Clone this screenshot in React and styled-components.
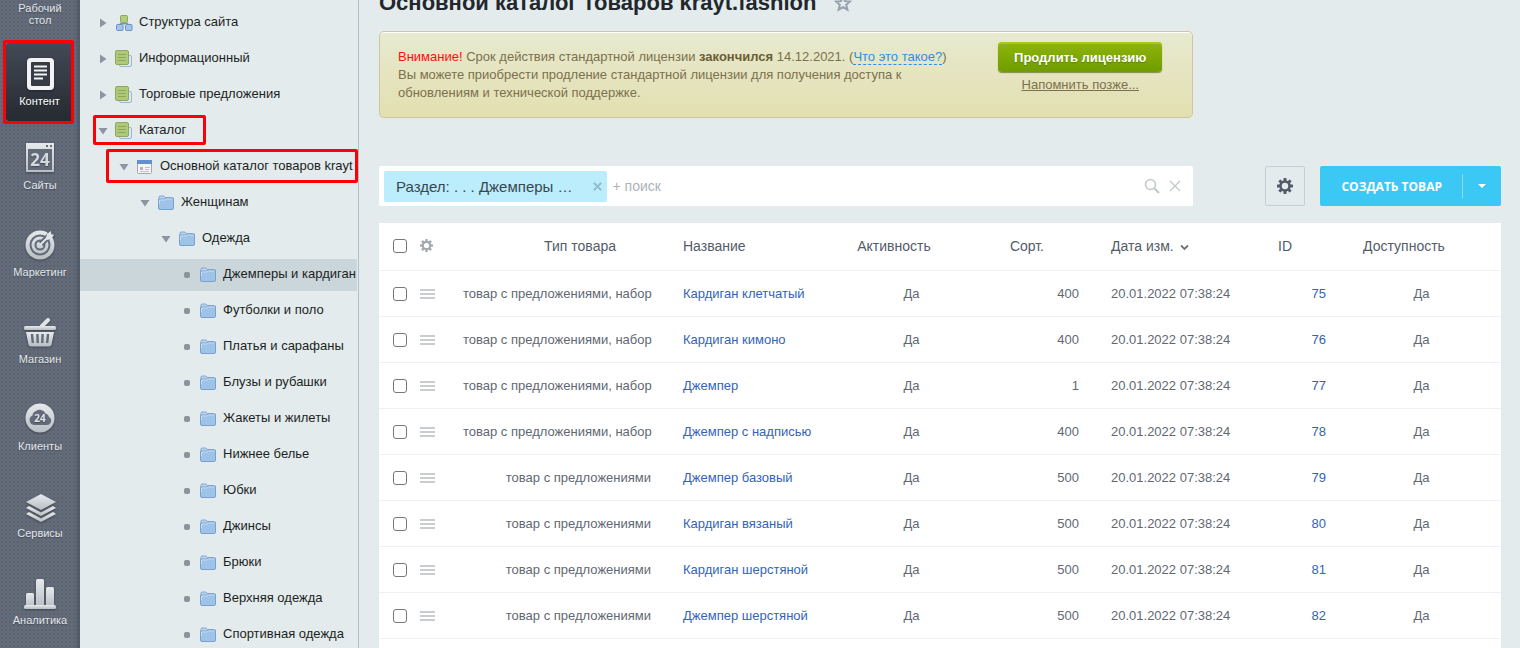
import React, { useState } from "react";
import styled, { createGlobalStyle, css } from "styled-components";

const GlobalStyle = createGlobalStyle`
  * {
    box-sizing: border-box;
  }
  body {
    margin: 0;
    background: #e3ebed;
    color: #1c1f22;
    font-family: "Liberation Sans", Arial, sans-serif;
    font-size: 13px;
  }
  button,
  input {
    font-family: inherit;
    margin: 0;
    padding: 0;
  }
  button {
    border: none;
    background: none;
    cursor: pointer;
  }
  a {
    color: inherit;
    text-decoration: none;
  }
`;

const Page = styled.div`
  display: flex;
  height: 100vh;
  overflow: hidden;
`;

/* main menu */

const Sidebar = styled.nav`
  flex: none;
  width: 80px;
  padding-top: 2px;
  background-color: #636a78;
  background-image: linear-gradient(
      to right,
      rgba(40, 46, 60, 0) 74px,
      rgba(40, 46, 60, 0.3) 80px
    ),
    radial-gradient(rgba(45, 60, 90, 0.14) 1px, transparent 1px);
  background-size: 100% 100%, 4px 4px;
`;

const SidebarItem = styled.a`
  position: relative;
  display: flex;
  flex-direction: column;
  align-items: center;
  gap: 3px;
  padding: 18px 0;
  color: #e3e8ec;
  font-size: 11px;
  line-height: 12px;
  text-align: center;
  text-shadow: 0 1px 1px rgba(0, 0, 0, 0.3);

  ${props =>
    props.$first &&
    css`
      padding: 0 16px 17px;
    `}

  ${props =>
    props.$active &&
    css`
      margin: 0 7px 1px 6px;
      padding: 13px 0 14px;
      color: #fff;
      background: linear-gradient(#434956, #262a31);
      border-radius: 3px;
    `}
`;

const SidebarIcon = styled.svg`
  width: 36px;
  height: 36px;
  filter: drop-shadow(0 1px 1px rgba(0, 0, 0, 0.35));
`;

const Marker = styled.span`
  position: absolute;
  top: ${props => props.$top}px;
  left: ${props => props.$left}px;
  right: ${props => props.$right}px;
  bottom: ${props => props.$bottom}px;
  border: 3px solid #fb0007;
  border-radius: 2px;
  pointer-events: none;
`;

/* tree */

const Tree = styled.aside`
  flex: none;
  width: 279px;
  padding: 7px 1px 0 0;
  overflow: hidden;
  background: #e3ebed;
  border-right: 1px solid #afbfcb;
`;

const TreeList = styled.ul`
  display: flex;
  flex-direction: column;
  gap: 4px;
  margin: 0;
  padding: 0;
  list-style: none;
`;

const TreeRow = styled.li`
  position: relative;
  flex: none;
  display: flex;
  align-items: center;
  height: 32px;
  padding-left: ${props => 16 + props.$level * 21}px;
  background: ${props => (props.$selected ? "#cbd6db" : "transparent")};
`;

const TreeToggle = styled.button`
  flex: none;
  display: flex;
  align-items: center;
  justify-content: center;
  width: 13px;
  height: 16px;
  margin-right: 6px;
`;

const TreeBullet = styled.span`
  flex: none;
  width: 6px;
  height: 6px;
  margin: 0 9px 0 4px;
  border-radius: 2px;
  background: #8b939b;
`;

const TreeLink = styled.a`
  display: flex;
  align-items: center;
  gap: 6px;
  min-width: 0;
  white-space: nowrap;

  svg {
    flex: none;
  }
`;

const TreeLabel = styled.span`
  padding-bottom: 2px;
  line-height: 16px;
`;

/* content */

const Main = styled.main`
  flex: 1;
  min-width: 0;
  display: grid;
  grid-template-columns: minmax(0, 1fr) auto;
  grid-template-rows: 31px 87px auto 1fr;
  column-gap: 72px;
  padding: 0 19px 0 20px;
`;

const TitleBar = styled.header`
  grid-column: 1 / -1;
  display: flex;
  align-items: center;
  gap: 18px;
  height: 28px;
  margin-top: -11px;
`;

const Title = styled.h1`
  margin: 0;
  color: #22272b;
  font-size: 22px;
  line-height: 28px;
  white-space: nowrap;
`;

const IconButton = styled.button`
  display: flex;
  align-items: center;
  justify-content: center;
`;

const Notice = styled.section`
  grid-column: 1;
  display: flex;
  justify-content: space-between;
  gap: 32px;
  padding: 10px 30px 0 18px;
  color: #7c704d;
  background: linear-gradient(#e7ead0, #e3dfb0);
  border: 1px solid #ccc79c;
  border-radius: 5px;
  box-shadow: inset 0 1px 0 #fff;
`;

const NoticeText = styled.p`
  max-width: 560px;
  margin: 6px 0 0;
  line-height: 18px;
`;

const Warning = styled.span`
  color: #ff0c0c;
`;

const NoticeStrong = styled.b`
  color: #6b5d33;
`;

const HelpLink = styled.a`
  color: #2b8fe8;
  border-bottom: 1px dashed #2b8fe8;
`;

const NoticeActions = styled.div`
  flex: none;
  display: flex;
  flex-direction: column;
  align-items: center;
  gap: 4px;
`;

const RenewButton = styled.button`
  height: 30px;
  padding: 0 16px;
  color: #fff;
  font-size: 13px;
  font-weight: bold;
  background: linear-gradient(#8fb50a, #6f9c00);
  border-radius: 4px;
  box-shadow: inset 0 2px 0 #a5c71f, 0 1px 1px rgba(70, 80, 0, 0.6);
  text-shadow: 0 1px 1px rgba(60, 90, 0, 0.5);
`;

const LaterLink = styled.a`
  line-height: 18px;
  text-decoration: underline;
`;

const Search = styled.div`
  grid-column: 1;
  display: flex;
  align-items: center;
  height: 40px;
  margin-top: 48px;
  padding: 0 12px 0 5px;
  background: #fff;
  border-radius: 2px;
`;

const FilterTag = styled.span`
  display: flex;
  align-items: center;
  justify-content: space-between;
  gap: 20px;
  height: 31px;
  padding: 0 5px 0 12px;
  color: #38474f;
  font-size: 15px;
  white-space: nowrap;
  background: #bcedfc;
  border-radius: 2px;
`;

const SearchInput = styled.input`
  flex: 1;
  min-width: 0;
  height: 100%;
  padding: 0 6px;
  font-size: 14px;
  border: none;
  outline: none;
  background: none;

  &::placeholder {
    color: #acb2b8;
    opacity: 1;
  }
`;

const SearchTools = styled.div`
  display: flex;
  gap: 9px;
`;

const Actions = styled.div`
  display: flex;
  gap: 15px;
  margin-top: 48px;
`;

const SettingsButton = styled(IconButton)`
  width: 40px;
  height: 40px;
  border: 1px solid #c6cfd3;
  border-radius: 2px;
`;

const SplitButton = styled.div`
  display: flex;
  align-items: center;
  height: 40px;
  background: #3bc8f5;
  border-radius: 2px;
`;

const CreateButton = styled.button`
  height: 100%;
  padding: 0 20px 0 21px;
  color: #fff;
  font: bold 12px "Open Sans", sans-serif;
  text-transform: uppercase;
`;

const CreateMenuButton = styled(IconButton)`
  width: 39px;
  height: 24px;
  border-left: 1px solid #8adef9;
`;

/* grid */

const GridCard = styled.div`
  grid-column: 1 / -1;
  margin-top: 17px;
  background: #fff;
`;

const Table = styled.table`
  width: 100%;
  table-layout: fixed;
  border-collapse: separate;
  border-spacing: 0;
  color: #5f6873;
`;

const Col = styled.col`
  width: ${props => props.$width}px;
`;

const cell = css`
  text-align: ${props => props.$align || "left"};
  border-bottom: 1px solid #edf1f2;
  white-space: nowrap;
`;

const HeadCell = styled.th`
  ${cell}
  height: 48px;
  padding: 0 ${props => (props.$control ? 0 : 16)}px 2px;
  color: #535c69;
  font-size: 14px;
  font-weight: normal;
`;

const Cell = styled.td`
  ${cell}
  height: 46px;
  padding: 0 ${props => (props.$control ? 0 : 16)}px;
`;

const HeadLabel = styled.span`
  display: inline-flex;
  align-items: center;
  gap: 6px;
  padding-right: ${props => (props.$sorted ? 0 : 35)}px;
`;

const Checkbox = styled.input`
  display: block;
  width: 14px;
  height: 14px;
  margin-left: 14px;
  appearance: none;
  background: #fff;
  border: 1px solid #767676;
  border-radius: 3px;

  &:checked {
    background: #3bc8f5;
  }
`;

const RowMenu = styled.button`
  display: flex;
  flex-direction: column;
  gap: 2px;
  width: 15px;
  margin-left: 5px;

  span {
    width: 15px;
    height: 2px;
    background: #c9cdd1;
  }
`;

const GridSettings = styled(IconButton)`
  margin-left: 5px;
`;

const CellLink = styled.a`
  color: #3464b5;
`;

const Metal = ({ id }) => (
  <linearGradient id={id} x1="0" y1="0" x2="0" y2="1">
    <stop offset="0" stopColor="#e6eaec" />
    <stop offset="1" stopColor="#b6bfc4" />
  </linearGradient>
);

const sidebarIcons = {
  content: (
    <>
      <rect x="5" y="2" width="27" height="32" rx="4" fill="#f1f3f4" />
      <rect x="9" y="6" width="19" height="24" rx="1" fill="#363b45" />
      <path
        d="M12 10.500h13M12 14.500h13M12 18.500h13M12 22.500h9"
        stroke="#f1f3f4"
        strokeWidth="2"
      />
    </>
  ),
  sites: (
    <>
      <path d="M4 3h28v29H4z" fill="url(#m-sites)" />
      <path d="M24 5h2v2h-2zM28 5h2v2h-2zM6 9h24v21H6z" fill="#636a78" />
      <text
        x="18"
        y="26"
        textAnchor="middle"
        fontFamily="Open Sans, sans-serif"
        fontWeight="bold"
        fontSize="17"
        fill="#d3dade"
      >
        24
      </text>
    </>
  ),
  marketing: (
    <>
      <circle cx="18" cy="18" r="14.500" fill="url(#m-marketing)" />
      <circle cx="18" cy="18" r="9.500" fill="none" stroke="#636a78" strokeWidth="2" />
      <circle cx="18" cy="18" r="4.500" fill="none" stroke="#636a78" strokeWidth="2" />
      <path d="M19 17L31 5" stroke="#636a78" strokeWidth="6" />
      <path d="M18 18L28 8" stroke="#dfe4e7" strokeWidth="2" />
      <path d="M24 11l1-4 4-3v3l3 1-3 4-4 1z" fill="#dfe4e7" />
    </>
  ),
  shop: (
    <>
      <path d="M20 12l6-6" stroke="#dfe4e7" strokeWidth="4" strokeLinecap="round" />
      <rect x="2" y="12" width="32" height="4" rx="1.500" fill="url(#m-shop)" />
      <path d="M4 18h28l-2.500 12.500q-.500 2-2.500 2H9q-2 0-2.500-2z" fill="url(#m-shop)" />
      <path
        d="M10 20l.800 9M15.400 20l.300 9M20.600 20l-.300 9M26 20l-.800 9"
        stroke="#636a78"
        strokeWidth="2.400"
      />
    </>
  ),
  clients: (
    <>
      <circle cx="18" cy="17" r="14.500" fill="url(#m-clients)" />
      <path
        d="M12 24a5 5 0 0 1-1.500-9.500A5 5 0 0 1 14 10a6.500 6.500 0 0 1 9.500 2.500A4.500 4.500 0 0 1 27 16a4.300 4.300 0 0 1-2 8z"
        fill="#636a78"
      />
      <text
        x="18"
        y="21"
        textAnchor="middle"
        fontFamily="Open Sans, sans-serif"
        fontWeight="bold"
        fontSize="10"
        fill="#dfe4e7"
      >
        24
      </text>
    </>
  ),
  services: (
    <g fill="url(#m-services)">
      <path d="M19 6l15 8-15 8-15-8z" />
      <path d="M4 20l3-2 12 6.500L31 18l3 2-15 8z" />
      <path d="M4 26l3-2 12 6.500L31 24l3 2-15 8z" />
    </g>
  ),
  analytics: (
    <g fill="url(#m-analytics)">
      <rect x="4" y="18" width="8" height="14" rx="1.500" />
      <rect x="14" y="4" width="8" height="28" rx="1.500" />
      <rect x="24" y="12" width="8" height="20" rx="1.500" />
      <rect x="2" y="30" width="32" height="4" rx="1.500" />
    </g>
  )
};

const FolderIcon = () => (
  <svg width="18" height="16" viewBox="0 0 18 16">
    <path d="M2 3.500V2q0-1 1-1h4l1.500 1.500H15V6H2z" fill="#b9d5ef" stroke="#86a8d2" />
    <path
      d="M1.500 4h6L9 3h7.500v10q0 1.500-1.500 1.500H3Q1.500 14.500 1.500 13z"
      fill="#9dc3e6"
      stroke="#7d9fcd"
    />
    <path d="M2.500 9V5H8l1.500-1h6" fill="none" stroke="#c6ddf2" />
  </svg>
);

const CatalogIcon = () => (
  <svg width="18" height="18" viewBox="0 0 18 18">
    <rect x="4.500" y="5.500" width="12" height="11" rx="1.500" fill="#dce9f6" stroke="#9db6d4" />
    <rect x="0.500" y="0.500" width="13" height="14" rx="1.500" fill="#afc87a" stroke="#8fa85e" />
    <path d="M3 4.500h8M3 7.500h8M3 10.500h8" stroke="#8ca75a" />
  </svg>
);

const StructureIcon = () => (
  <svg width="18" height="18" viewBox="0 0 18 18">
    <path d="M9 7v4M5 12V9.500h8V12" fill="none" stroke="#8295ad" />
    <rect x="5.500" y="1.500" width="7" height="7" rx="1" fill="#b3cc80" stroke="#8fa85e" />
    <rect x="1.500" y="10.500" width="6.500" height="6" rx="1" fill="#a3c4ea" stroke="#6b91c6" />
    <rect x="10.500" y="10.500" width="6.500" height="6" rx="1" fill="#a3c4ea" stroke="#6b91c6" />
  </svg>
);

const BlockIcon = () => (
  <svg width="18" height="16" viewBox="0 0 18 16">
    <rect x="1.500" y="1.500" width="14" height="13" rx="1" fill="#f4f4f4" stroke="#a3a8ae" />
    <path d="M1 1h15v4H1z" fill="#5f90d2" />
    <path d="M4 8h3v3H4z" fill="#b3b3b3" />
    <path d="M9 8.500h5M9 10.500h4M4 12.500h9" stroke="#c4c4c4" />
  </svg>
);

const treeIcons = {
  structure: StructureIcon,
  catalog: CatalogIcon,
  block: BlockIcon,
  folder: FolderIcon
};

const Arrow = ({ open }) => (
  <svg width="10" height="10" viewBox="0 0 10 10">
    <path d={open ? "M.500 2h9L5 8.500z" : "M2 .500v9L8.500 5z"} fill="#8c96a3" />
  </svg>
);

const teeth = [0, 45, 90, 135, 180, 225, 270, 315];

const Gear = ({ size, color }) => (
  <svg width={size} height={size} viewBox="0 0 16 16">
    <circle cx="8" cy="8" r="4.500" fill="none" stroke={color} strokeWidth="2.600" />
    {teeth.map(angle => (
      <rect
        key={angle}
        x="6.500"
        width="3"
        height="3.500"
        rx="0.500"
        fill={color}
        transform={`rotate(${angle} 8 8)`}
      />
    ))}
  </svg>
);

const Cross = ({ size, color, weight }) => (
  <svg width={size} height={size} viewBox="0 0 12 12">
    <path d="M1 1l10 10M11 1L1 11" stroke={color} strokeWidth={weight} />
  </svg>
);

const menu = [
  { title: "Рабочий стол", first: true },
  { title: "Контент", icon: "content", active: true },
  { title: "Сайты", icon: "sites" },
  { title: "Маркетинг", icon: "marketing" },
  { title: "Магазин", icon: "shop" },
  { title: "Клиенты", icon: "clients" },
  { title: "Сервисы", icon: "services" },
  { title: "Аналитика", icon: "analytics" }
];

const tree = [
  { title: "Структура сайта", level: 0, icon: "structure" },
  { title: "Информационный", level: 0, icon: "catalog" },
  { title: "Торговые предложения", level: 0, icon: "catalog" },
  {
    title: "Каталог",
    level: 0,
    icon: "catalog",
    open: true,
    marker: { $top: 0, $left: 13, $right: 151, $bottom: 2 }
  },
  {
    title: "Основной каталог товаров krayt",
    level: 1,
    icon: "block",
    open: true,
    marker: { $top: -2, $left: 26, $right: -1, $bottom: 0 }
  },
  { title: "Женщинам", level: 2, icon: "folder", open: true },
  { title: "Одежда", level: 3, icon: "folder", open: true },
  { title: "Джемперы и кардиган", level: 4, icon: "folder", selected: true },
  { title: "Футболки и поло", level: 4, icon: "folder" },
  { title: "Платья и сарафаны", level: 4, icon: "folder" },
  { title: "Блузы и рубашки", level: 4, icon: "folder" },
  { title: "Жакеты и жилеты", level: 4, icon: "folder" },
  { title: "Нижнее белье", level: 4, icon: "folder" },
  { title: "Юбки", level: 4, icon: "folder" },
  { title: "Джинсы", level: 4, icon: "folder" },
  { title: "Брюки", level: 4, icon: "folder" },
  { title: "Верхняя одежда", level: 4, icon: "folder" },
  { title: "Спортивная одежда", level: 4, icon: "folder" }
];

const widths = [36, 32, 220, 174, 141, 113, 167, 80, 159];

const withSet = "товар с предложениями, набор";
const withOffers = "товар с предложениями";

const products = [
  { id: 75, type: withSet, name: "Кардиган клетчатый", sort: 400 },
  { id: 76, type: withSet, name: "Кардиган кимоно", sort: 400 },
  { id: 77, type: withSet, name: "Джемпер", sort: 1 },
  { id: 78, type: withSet, name: "Джемпер с надписью", sort: 400 },
  { id: 79, type: withOffers, name: "Джемпер базовый", sort: 500 },
  { id: 80, type: withOffers, name: "Кардиган вязаный", sort: 500 },
  { id: 81, type: withOffers, name: "Кардиган шерстяной", sort: 500 },
  { id: 82, type: withOffers, name: "Джемпер шерстяной", sort: 500 }
];

const MainMenu = () => (
  <Sidebar>
    {menu.map(item => (
      <SidebarItem
        key={item.title}
        href="#"
        $first={item.first}
        $active={item.active}
      >
        {item.icon && (
          <SidebarIcon viewBox="0 0 36 36" aria-hidden="true">
            <defs>
              <Metal id={`m-${item.icon}`} />
            </defs>
            {sidebarIcons[item.icon]}
          </SidebarIcon>
        )}
        {item.title}
        {item.active && <Marker $top={-3} $left={-3} $right={-1} $bottom={-3} />}
      </SidebarItem>
    ))}
  </Sidebar>
);

const TreeItem = ({ item }) => {
  const Icon = treeIcons[item.icon];
  return (
    <TreeRow $level={item.level} $selected={item.selected}>
      {item.level === 4 ? (
        <TreeBullet />
      ) : (
        <TreeToggle aria-label={item.title} aria-expanded={!!item.open}>
          <Arrow open={item.open} />
        </TreeToggle>
      )}
      <TreeLink href="#">
        <Icon />
        <TreeLabel>{item.title}</TreeLabel>
      </TreeLink>
      {item.marker && <Marker {...item.marker} />}
    </TreeRow>
  );
};

const LicenseNotice = () => (
  <Notice>
    <NoticeText>
      <Warning>Внимание!</Warning> Срок действия стандартной лицензии{" "}
      <NoticeStrong>закончился</NoticeStrong> 14.12.2021. (
      <HelpLink href="#">Что это такое?</HelpLink>)<br />
      Вы можете приобрести продление стандартной лицензии для получения доступа
      к обновлениям и технической поддержке.
    </NoticeText>
    <NoticeActions>
      <RenewButton>Продлить лицензию</RenewButton>
      <LaterLink href="#">Напомнить позже...</LaterLink>
    </NoticeActions>
  </Notice>
);

const ProductRow = ({ product, checked, onToggle }) => (
  <tr>
    <Cell $control>
      <Checkbox
        type="checkbox"
        aria-label={product.name}
        checked={checked}
        onChange={() => onToggle(product.id)}
      />
    </Cell>
    <Cell $control>
      <RowMenu aria-label="Действия">
        <span />
        <span />
        <span />
      </RowMenu>
    </Cell>
    <Cell $align="right">{product.type}</Cell>
    <Cell>
      <CellLink href="#">{product.name}</CellLink>
    </Cell>
    <Cell $align="center">Да</Cell>
    <Cell $align="right">{product.sort}</Cell>
    <Cell>20.01.2022 07:38:24</Cell>
    <Cell $align="right">
      <CellLink href="#">{product.id}</CellLink>
    </Cell>
    <Cell $align="center">Да</Cell>
  </tr>
);

const ProductGrid = () => {
  const [selected, setSelected] = useState([]);
  const all = selected.length === products.length;

  const toggle = id =>
    setSelected(
      selected.includes(id) ? selected.filter(s => s !== id) : [...selected, id]
    );

  return (
    <GridCard>
      <Table>
        <colgroup>
          {widths.map((width, i) => (
            <Col key={i} $width={width} />
          ))}
        </colgroup>
        <thead>
          <tr>
            <HeadCell $control>
              <Checkbox
                type="checkbox"
                aria-label="Выбрать все"
                checked={all}
                onChange={() => setSelected(all ? [] : products.map(p => p.id))}
              />
            </HeadCell>
            <HeadCell $control>
              <GridSettings aria-label="Настройки">
                <Gear size={13} color="#a4a9af" />
              </GridSettings>
            </HeadCell>
            <HeadCell $align="right">
              <HeadLabel>Тип товара</HeadLabel>
            </HeadCell>
            <HeadCell>
              <HeadLabel>Название</HeadLabel>
            </HeadCell>
            <HeadCell $align="center">
              <HeadLabel>Активность</HeadLabel>
            </HeadCell>
            <HeadCell $align="right">
              <HeadLabel>Сорт.</HeadLabel>
            </HeadCell>
            <HeadCell>
              <HeadLabel $sorted>
                Дата изм.
                <svg width="9" height="10" viewBox="0 0 9 10">
                  <path
                    d="M1 4.500L4.500 8 8 4.500"
                    fill="none"
                    stroke="#6b737e"
                    strokeWidth="1.800"
                  />
                </svg>
              </HeadLabel>
            </HeadCell>
            <HeadCell $align="right">
              <HeadLabel>ID</HeadLabel>
            </HeadCell>
            <HeadCell $align="center">
              <HeadLabel>Доступность</HeadLabel>
            </HeadCell>
          </tr>
        </thead>
        <tbody>
          {products.map(product => (
            <ProductRow
              key={product.id}
              product={product}
              checked={selected.includes(product.id)}
              onToggle={toggle}
            />
          ))}
        </tbody>
      </Table>
    </GridCard>
  );
};

const App = () => (
  <>
    <GlobalStyle />
    <Page>
      <MainMenu />
      <Tree>
        <TreeList>
          {tree.map(item => (
            <TreeItem key={item.title} item={item} />
          ))}
        </TreeList>
      </Tree>
      <Main>
        <TitleBar>
          <Title>Основной каталог товаров krayt.fashion</Title>
          <IconButton aria-label="В избранное">
            <svg width="18" height="18" viewBox="0 0 18 18">
              <path
                d="M9 2.500l2 4.500 5 .500-3.800 3.300 1.200 4.900L9 13.200l-4.400 2.500 1.200-4.900L2 7.500 7 7z"
                fill="none"
                stroke="#97a2ae"
                strokeWidth="2"
              />
            </svg>
          </IconButton>
        </TitleBar>
        <LicenseNotice />
        <Search>
          <FilterTag>
            Раздел: . . . Джемперы …
            <IconButton aria-label="Убрать фильтр">
              <Cross size={9} color="#94bccb" weight={2.4} />
            </IconButton>
          </FilterTag>
          <SearchInput aria-label="Поиск" placeholder="+ поиск" />
          <SearchTools>
            <IconButton aria-label="Найти">
              <svg width="16" height="16" viewBox="0 0 16 16" fill="none" stroke="#c3c8cc">
                <circle cx="6.500" cy="6.500" r="5" strokeWidth="1.500" />
                <path d="M10.500 10.500l4.500 4.500" strokeWidth="2.200" />
              </svg>
            </IconButton>
            <IconButton aria-label="Очистить">
              <Cross size={12} color="#c3c8cc" weight={1.4} />
            </IconButton>
          </SearchTools>
        </Search>
        <Actions>
          <SettingsButton aria-label="Настройки списка">
            <Gear size={16} color="#535c69" />
          </SettingsButton>
          <SplitButton>
            <CreateButton>Создать товар</CreateButton>
            <CreateMenuButton aria-label="Ещё">
              <svg width="8" height="4" viewBox="0 0 8 4">
                <path d="M0 0h8L4 4z" fill="#fff" />
              </svg>
            </CreateMenuButton>
          </SplitButton>
        </Actions>
        <ProductGrid />
      </Main>
    </Page>
  </>
);

export default App;
